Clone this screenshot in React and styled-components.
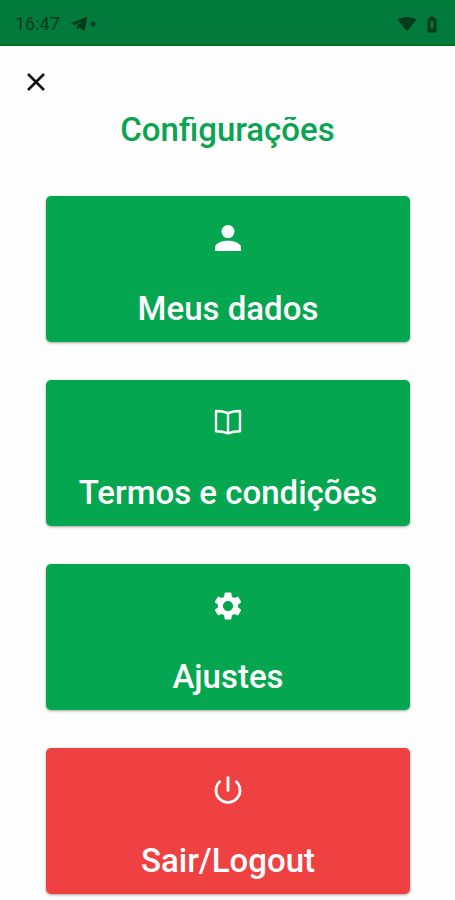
import React from "react";
import styled, { createGlobalStyle } from "styled-components";

const GlobalStyle = createGlobalStyle`
  *, *::before, *::after { box-sizing: border-box; }
  body {
    margin: 0;
    background: #fefefe;
    font-family: Roboto, "Liberation Sans", sans-serif;
  }
`;

const Page = styled.div`
  display: flex;
  flex-direction: column;
`;

const StatusBar = styled.header`
  display: flex;
  align-items: center;
  justify-content: space-between;
  height: 46px;
  padding: 4px 18px 0 15px;
  background: #017a3c;
  border-bottom: 2px solid #006f20;
  color: #053a1a;
`;

const StatusGroup = styled.div`
  display: flex;
  align-items: center;
  gap: ${({ $gap }) => $gap}px;
`;

const Clock = styled.time`
  margin-right: 8px;
  font-size: 18px;
  line-height: 24px;
`;

const Icon = styled.svg`
  display: block;
  flex: none;
  fill: currentColor;
`;

const Content = styled.main`
  display: flex;
  flex-direction: column;
  padding: 18px 0 6px;
`;

const CloseButton = styled.button`
  display: flex;
  align-self: flex-start;
  margin-left: 18px;
  padding: 9px;
  border: 0;
  background: none;
  color: #111111;
  cursor: pointer;
`;

const Title = styled.h1`
  margin: 17px 0 0;
  overflow: hidden;
  color: #0ba452;
  font-size: 33px;
  font-weight: 500;
  line-height: 26px;
  padding-bottom: 11px;
  text-align: center;
`;

const Menu = styled.nav`
  display: flex;
  flex-direction: column;
  gap: 38px;
  margin-top: 42px;
  padding: 0 45px 0 46px;
`;

const MenuButton = styled.button`
  display: flex;
  flex-direction: column;
  align-items: center;
  gap: 37px;
  width: 100%;
  padding: 28px 8px 13px;
  border: 0;
  border-radius: 5px;
  background: ${({ $danger }) => ($danger ? "#ef4141" : "#04a64f")};
  box-shadow: 0 1px 3px rgba(0, 0, 0, 0.36);
  color: #ffffff;
  font-family: inherit;
  font-size: 33px;
  font-weight: 500;
  line-height: 40px;
  cursor: pointer;
`;

const PersonIcon = () => (
  <Icon width="28" height="28" viewBox="0 0 28 28" aria-hidden="true">
    <circle cx="14" cy="7.6" r="6.5" />
    <path d="M14 16.8C9.5 16.8 1 18.6 1 23.6V27H27V23.6C27 18.6 18.5 16.8 14 16.8Z" />
  </Icon>
);

const BookIcon = () => (
  <Icon width="28" height="28" viewBox="0 0 28 28" aria-hidden="true">
    <path
      d="M14 5.2C10 3.5 6 3 2 3V23.2C6 23.2 10 23.7 14 25.4C18 23.7 22 23.2 26 23.2V3C22 3 18 3.5 14 5.2ZM14 5.2V25"
      fill="none"
      stroke="currentColor"
      strokeWidth="2.4"
      strokeLinejoin="round"
    />
  </Icon>
);

const GearIcon = () => (
  <Icon width="28" height="28" viewBox="2 2 20 20" aria-hidden="true">
    <path d="M19.14 12.94c.04-.3.06-.61.06-.94 0-.32-.02-.64-.07-.94l2.03-1.58c.18-.14.23-.41.12-.61l-1.92-3.32c-.12-.22-.37-.29-.59-.22l-2.39.96c-.5-.38-1.03-.7-1.62-.94l-.36-2.54c-.04-.24-.24-.41-.48-.41h-3.84c-.24 0-.43.17-.47.41l-.36 2.54c-.59.24-1.13.57-1.62.94l-2.39-.96c-.22-.08-.47 0-.59.22L2.74 8.87c-.12.21-.08.47.12.61l2.03 1.58c-.05.3-.09.63-.09.94s.02.64.07.94l-2.03 1.58c-.18.14-.23.41-.12.61l1.92 3.32c.12.22.37.29.59.22l2.39-.96c.5.38 1.03.7 1.62.94l.36 2.54c.05.24.24.41.48.41h3.84c.24 0 .44-.17.47-.41l.36-2.54c.59-.24 1.13-.56 1.62-.94l2.39.96c.22.08.47 0 .59-.22l1.92-3.32c.12-.22.07-.47-.12-.61l-2.01-1.58zM12 15.6c-1.98 0-3.6-1.62-3.6-3.6s1.62-3.6 3.6-3.6 3.6 1.62 3.6 3.6-1.62 3.6-3.6 3.6z" />
  </Icon>
);

const PowerIcon = () => (
  <Icon width="28" height="28" viewBox="0 0 28 28" aria-hidden="true">
    <path
      d="M14 0.5V15.5M6.500 5A12 12 0 1 0 21.500 5"
      fill="none"
      stroke="currentColor"
      strokeWidth="2.8"
    />
  </Icon>
);

const CloseIcon = () => (
  <Icon width="18" height="18" viewBox="0 0 18 18" aria-hidden="true">
    <path
      d="M1 1L17 17M17 1L1 17"
      fill="none"
      stroke="currentColor"
      strokeWidth="2.6"
    />
  </Icon>
);

const TelegramIcon = () => (
  <Icon width="18" height="16" viewBox="0 0 18 16" aria-hidden="true">
    <path d="M0.5 7.5L17.5 0.5L14.5 15L9.2 11.5L7 13.5L6.7 9.8L13 4.3L5.2 9Z" />
  </Icon>
);

const DotIcon = () => (
  <Icon width="6" height="6" viewBox="0 0 6 6" aria-hidden="true">
    <circle cx="3" cy="3" r="2.5" />
  </Icon>
);

const WifiIcon = () => (
  <Icon width="20" height="16" viewBox="0 0 20 16" aria-hidden="true">
    <path d="M0.5 3.5C6 0 14 0 19.5 3.5L10 15.5Z" />
  </Icon>
);

const BatteryIcon = () => (
  <Icon width="10" height="17" viewBox="0 0 10 17" aria-hidden="true">
    <path
      fillRule="evenodd"
      d="M3 0.5H7V2H8L9.5 4V16.5H0.5V4L2 2H3ZM3.5 5V12.5H6.5V5Z"
    />
  </Icon>
);

const items = [
  { label: "Meus dados", Glyph: PersonIcon },
  { label: "Termos e condições", Glyph: BookIcon },
  { label: "Ajustes", Glyph: GearIcon },
  { label: "Sair/Logout", Glyph: PowerIcon, danger: true },
];

export default function App() {
  return (
    <Page>
      <GlobalStyle />
      <StatusBar>
        <StatusGroup $gap={2}>
          <Clock>16:47</Clock>
          <TelegramIcon />
          <DotIcon />
        </StatusGroup>
        <StatusGroup $gap={10}>
          <WifiIcon />
          <BatteryIcon />
        </StatusGroup>
      </StatusBar>
      <Content>
        <CloseButton type="button" aria-label="Fechar">
          <CloseIcon />
        </CloseButton>
        <Title>Configurações</Title>
        <Menu aria-label="Configurações">
          {items.map(({ label, Glyph, danger }) => (
            <MenuButton key={label} type="button" $danger={danger}>
              <Glyph />
              <span>{label}</span>
            </MenuButton>
          ))}
        </Menu>
      </Content>
    </Page>
  );
}
